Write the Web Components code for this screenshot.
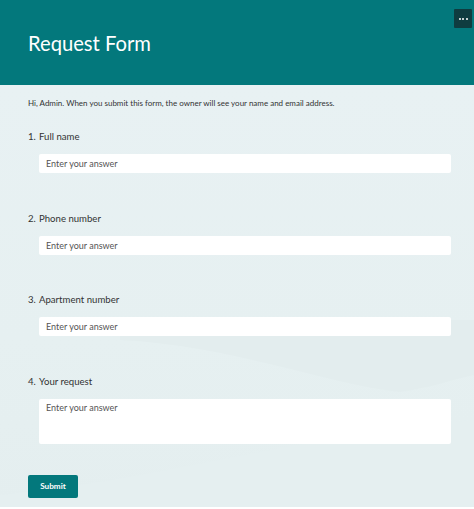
<!DOCTYPE html>
<html>
<head>
<meta charset="utf-8">
<title>Request Form</title>
<style>
  html, body { margin: 0; padding: 0; }
  body { font-family: "Lato", "Noto Sans", sans-serif; }
</style>
</head>
<body>
<request-form>
  <form-header slot="header" title="Request Form"></form-header>
  <p slot="notice">Hi, Admin. When you submit this form, the owner will see your name and email address.</p>
  <form-question number="1" label="Full name"></form-question>
  <form-question number="2" label="Phone number"></form-question>
  <form-question number="3" label="Apartment number"></form-question>
  <form-question number="4" label="Your request" multiline></form-question>
  <submit-button slot="footer">Submit</submit-button>
</request-form>

<script>
class RequestForm extends HTMLElement {
    constructor() {
        super();
        this.attachShadow({mode: 'open'});
        this.shadowRoot.innerHTML = `
        <style>
          :host {
             display: block;
             width: 474px;
             height: 509px;
             overflow: hidden;
             background: #fff;
          }
          #body {
             position: relative;
             height: 422px;
             box-sizing: border-box;
             padding: 11px 23px 0 28px;
             background: linear-gradient(#e8f1f3, #e6f0f1 60%, #e4eeef);
          }
          #waves {
             position: absolute;
             left: 0;
             top: 0;
             width: 100%;
             height: 100%;
          }
          #content {
             position: relative;
          }
          #questions {
             display: flex;
             flex-direction: column;
             margin-top: 17px;
          }
          ::slotted(p) {
             margin: 0;
             font-size: 8px;
             line-height: 15px;
             color: #333;
          }
        </style>
        <slot name="header"></slot>
        <div id="body">
          <svg id="waves" viewBox="0 0 474 422" preserveAspectRatio="none">
            <path d="M120 255 C230 260 330 300 400 307 C430 303 450 295 474 290 L474 235 L120 235 Z" fill="#e3edee"/>
            <path d="M0 410 C160 395 300 350 474 335 L474 422 L0 422 Z" fill="#e5eff0"/>
          </svg>
          <div id="content">
            <slot name="notice"></slot>
            <div id="questions"><slot></slot></div>
            <slot name="footer"></slot>
          </div>
        </div>
        `;
    }
}

class FormHeader extends HTMLElement {
    constructor() {
        super();
        this.attachShadow({mode: 'open'});
        this.shadowRoot.innerHTML = `
        <style>
          :host {
             display: flex;
             align-items: flex-start;
             justify-content: space-between;
             height: 85px;
             box-sizing: border-box;
             padding: 9px 2px 0 28px;
             background: #03787c;
          }
          h1 {
             margin: 20px 0 0;
             font-size: 20.2px;
             font-weight: 400;
             line-height: 28px;
             color: #fff;
          }
          #menu {
             display: flex;
             align-items: center;
             justify-content: center;
             gap: 1.5px;
             width: 18px;
             height: 19px;
             background: #0f3c40;
             border-radius: 1px;
          }
          #menu span {
             width: 2px;
             height: 2px;
             border-radius: 50%;
             background: #fff;
          }
        </style>
        <h1>${this.getAttribute('title')}</h1>
        <div id="menu"><span></span><span></span><span></span></div>
        `;
    }
}

class FormQuestion extends HTMLElement {
    constructor() {
        super();
        this.attachShadow({mode: 'open'});
        const multiline = this.hasAttribute('multiline');
        this.shadowRoot.innerHTML = `
        <style>
          :host {
             display: block;
             height: 81.67px;
             font-size: 9.6px;
             color: #333;
          }
          #label {
             display: flex;
             height: 17px;
             line-height: 17px;
             margin-bottom: 9px;
          }
          #number {
             width: 11px;
          }
          #answer {
             margin-left: 11px;
             height: ${multiline ? 45 : 19}px;
             box-sizing: border-box;
             padding: ${multiline ? 1 : 0}px 7px 0;
             font-size: 9px;
             line-height: ${multiline ? 15 : 19}px;
             background: #fff;
             border-radius: 2px;
             color: #555;
          }
        </style>
        <div id="label">
          <span id="number">${this.getAttribute('number')}.</span>
          <span>${this.getAttribute('label')}</span>
        </div>
        <div id="answer">Enter your answer</div>
        `;
    }
}

class SubmitButton extends HTMLElement {
    constructor() {
        super();
        this.attachShadow({mode: 'open'});
        this.shadowRoot.innerHTML = `
        <style>
          :host {
             display: flex;
             align-items: center;
             justify-content: center;
             width: 50px;
             height: 23px;
             margin-top: 20px;
             background: #03787c;
             border-radius: 2px;
             color: #fff;
             font-size: 8.2px;
             font-weight: 700;
          }
        </style>
        <slot></slot>
        `;
    }
}

window.customElements.define('request-form', RequestForm);
window.customElements.define('form-header', FormHeader);
window.customElements.define('form-question', FormQuestion);
window.customElements.define('submit-button', SubmitButton);
</script>
</body>
</html>
